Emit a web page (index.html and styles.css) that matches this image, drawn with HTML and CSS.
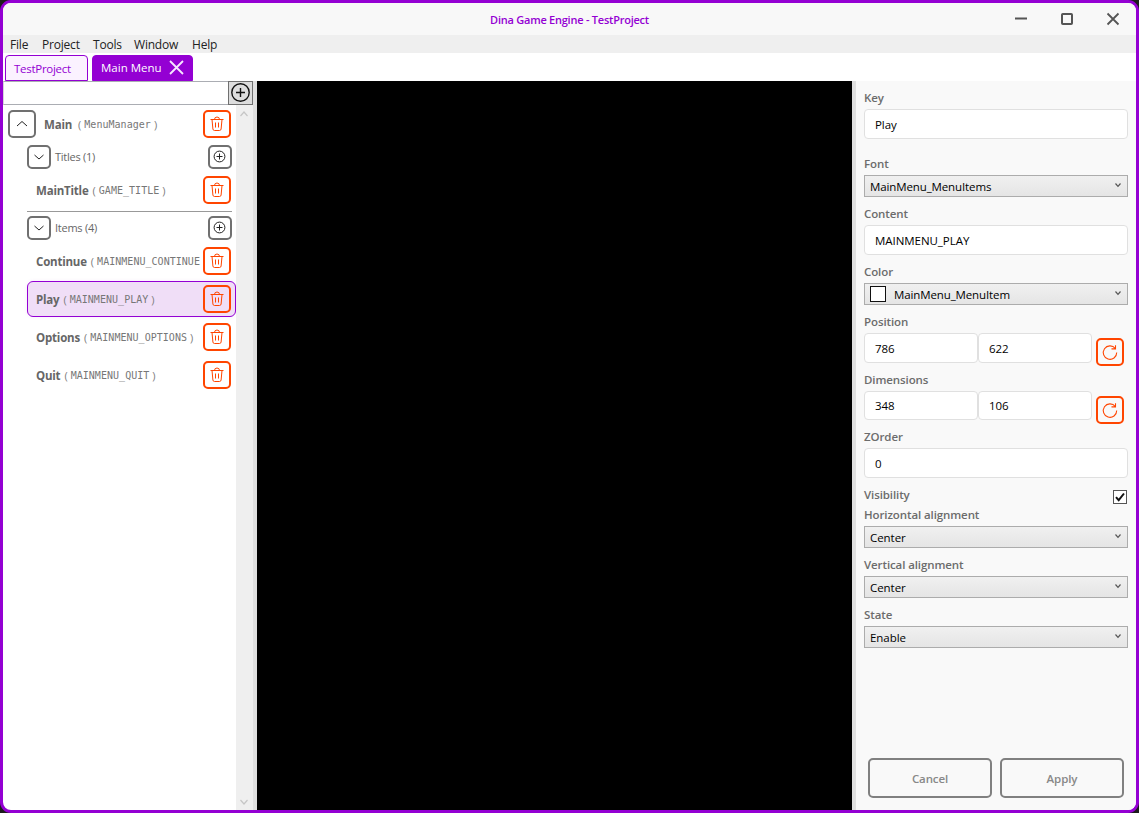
FILE: index.html
```html
<!DOCTYPE html>
<html lang="en">
<head>
<meta charset="utf-8">
<title>Dina Game Engine - TestProject</title>
<link rel="stylesheet" href="styles.css">
</head>
<body>
<svg class="defs" width="0" height="0">
  <symbol id="trash" viewBox="0 0 28 28"><path d="M7.5 9.5h13M11.5 9.500q0-2.500 2.500-2.500t2.500 2.500M9 9.500l.9 9.500q.2 1.500 1.600 1.500h5q1.400 0 1.600-1.500l.9-9.500M12.500 12.500v5M15.500 12.500v5" fill="none" stroke="#ff4500" stroke-width="1"/></symbol>
  <symbol id="plus" viewBox="0 0 24 24"><g fill="none" stroke="#222" stroke-width="1"><circle cx="11.500" cy="11.500" r="5.400"/><path d="M8.500 11.500h6M11.500 8.500v6"/></g></symbol>
  <symbol id="reset" viewBox="0 0 28 28"><path d="M19.300 10.500A6.700 6.700 0 1 0 20.700 14.500M15.500 10.900h4V7.200" fill="none" stroke="#ff4500" stroke-width="1.100"/></symbol>
  <symbol id="down" viewBox="0 0 24 24"><path d="M7.500 10l4.500 4 4.500-4" fill="none" stroke="#222" stroke-width="1"/></symbol>
  <symbol id="caret" viewBox="0 0 8 8"><path d="M1.500 2.500L4 5.300l2.500-2.800" fill="none" stroke="#555" stroke-width="1.200"/></symbol>
</svg>
<div class="window">
  <header class="titlebar">
    <span class="title">Dina Game Engine - TestProject</span>
    <svg class="winbtns" width="108" height="16" viewBox="0 0 108 16" fill="none" stroke="#555"><path d="M0 7.500h12" stroke-width="2"/><rect x="47" y="3" width="10" height="10" rx=".8" stroke-width="2"/><path d="M92.500 2.500l11 11M103.500 2.500l-11 11" stroke-width="1.800"/></svg>
  </header>
  <nav class="menu"><span class="m1">File</span><span class="m2">Project</span><span class="m3">Tools</span><span class="m4">Window</span><span class="m5">Help</span></nav>
  <div class="tabs">
    <div class="tab"><span class="t-test">TestProject</span></div>
    <div class="tab active"><span class="t-main">Main Menu</span><svg width="15" height="15" viewBox="0 0 15 15"><path d="M1 1l13 13M14 1L1 14" stroke="#f6e6ff" stroke-width="1.800" fill="none"/></svg></div>
  </div>
  <div class="workspace">
    <aside class="sidebar">
      <div class="search"><div class="searchbox"></div><div class="add"><svg width="22" height="22" viewBox="0 0 22 22" fill="none" stroke="#111" stroke-width="1.400"><circle cx="10.500" cy="10.500" r="8.700"/><path d="M6 10.500h9M10.500 6v9"/></svg></div></div>
      <div class="treewrap">
        <div class="tree">
          <div class="row main"><span class="btn"><svg><path d="M9 16l5-4.500 5 4.500" fill="none" stroke="#222"/></svg></span><b class="n-main">Main</b><i>(</i><code>MenuManager</code><i>)</i><span class="btn red"><svg><use href="#trash"/></svg></span></div>
          <div class="row group"><span class="btn small"><svg><use href="#down"/></svg></span><em>Titles (1)</em><span class="btn small end"><svg><use href="#plus"/></svg></span></div>
          <div class="row item first"><b>MainTitle</b><i>(</i><code>GAME_TITLE</code><i>)</i><span class="btn red"><svg><use href="#trash"/></svg></span></div>
          <div class="divider"></div>
          <div class="row group items"><span class="btn small"><svg><use href="#down"/></svg></span><em>Items (4)</em><span class="btn small end"><svg><use href="#plus"/></svg></span></div>
          <div class="row item"><b>Continue</b><i>(</i><code>MAINMENU_CONTINUE</code><span class="btn red"><svg><use href="#trash"/></svg></span></div>
          <div class="row item selected"><b>Play</b><i>(</i><code>MAINMENU_PLAY</code><i>)</i><span class="btn red"><svg><use href="#trash"/></svg></span></div>
          <div class="row item"><b>Options</b><i>(</i><code>MAINMENU_OPTIONS</code><i>)</i><span class="btn red"><svg><use href="#trash"/></svg></span></div>
          <div class="row item"><b>Quit</b><i>(</i><code>MAINMENU_QUIT</code><i>)</i><span class="btn red"><svg><use href="#trash"/></svg></span></div>
        </div>
        <div class="scrollbar">
          <svg width="10" height="8" viewBox="0 0 10 8"><path d="M1.500 6L5 2l3.500 4" fill="none" stroke="#c6c6c6" stroke-width="1.200"/></svg>
          <svg width="10" height="8" viewBox="0 0 10 8"><path d="M1.500 2L5 6l3.500-4" fill="none" stroke="#c6c6c6" stroke-width="1.200"/></svg>
        </div>
      </div>
    </aside>
    <div class="splitter"></div>
    <main class="canvas"></main>
    <div class="splitter"></div>
    <section class="props">
      <div class="field key"><label>Key</label><div class="input">Play</div></div>
      <div class="field"><label>Font</label><div class="select"><span class="v-wide">MainMenu_MenuItems</span><svg><use href="#caret"/></svg></div></div>
      <div class="field"><label>Content</label><div class="input"><span class="v-caps">MAINMENU_PLAY</span></div></div>
      <div class="field"><label>Color</label><div class="select"><span class="swatch"></span><span class="v-wide">MainMenu_MenuItem</span><svg><use href="#caret"/></svg></div></div>
      <div class="field"><label>Position</label><div class="pair"><div class="input">786</div><div class="input">622</div><span class="btn red"><svg><use href="#reset"/></svg></span></div></div>
      <div class="field dims"><label>Dimensions</label><div class="pair"><div class="input">348</div><div class="input">106</div><span class="btn red"><svg><use href="#reset"/></svg></span></div></div>
      <div class="field"><label>ZOrder</label><div class="input">0</div></div>
      <div class="field check"><label>Visibility</label><svg width="14" height="14" viewBox="0 0 14 14"><rect x=".5" y=".5" width="13" height="13" fill="#fff" stroke="#555"/><path d="M3 7.200l2.700 3L11 3.500" fill="none" stroke="#111" stroke-width="2"/></svg></div>
      <div class="field"><label>Horizontal alignment</label><div class="select">Center<svg><use href="#caret"/></svg></div></div>
      <div class="field"><label>Vertical alignment</label><div class="select">Center<svg><use href="#caret"/></svg></div></div>
      <div class="field"><label>State</label><div class="select">Enable<svg><use href="#caret"/></svg></div></div>
      <div class="actions"><div class="action">Cancel</div><div class="action">Apply</div></div>
    </section>
  </div>
</div>
</body>
</html>
```
FILE: styles.css
```css
* { box-sizing: border-box; }
html { background: #1c1c1c; }
body { margin: 0; height: 813px; overflow: hidden; font: 12px/16px "Open Sans", "Noto Sans", sans-serif; color: #111; }
.defs { position: absolute; }
svg { display: block; flex: none; }
span, b, i, em, code, label { white-space: nowrap; }
.window { width: 1139px; height: 813px; border: 3px solid #9400d3; border-radius: 11px; overflow: hidden; background: #fff; display: flex; flex-direction: column; }
.titlebar { height: 32px; background: #f8f8f8; display: grid; grid-template-columns: 1fr auto 1fr; align-items: center; }
.title { grid-column: 2; color: #9400d3; font-size: 11px; font-weight: 600; letter-spacing: -.24px; line-height: 34px; }
.winbtns { justify-self: end; margin: -1px 13px 1px 0; }
.menu { height: 18px; background: #efefef; display: flex; padding-left: 7px; line-height: 19px; color: #222; }
.menu span { font-size: 12px; letter-spacing: -.2px; }
.m1 { width: 32px; } .m2 { width: 51px; } .m3 { width: 41px; } .m4 { width: 58px; }
.tabs { height: 28px; display: flex; gap: 4px; padding: 2px 2px 0; }
.tab { width: 83px; height: 26px; border: 1px solid #9400d3; border-radius: 4px 4px 0 0; background: #fbf2ff; color: #9400d3; padding-left: 8px; line-height: 26px; font-size: 11.500px; }
.t-test { display: block; letter-spacing: -.28px; }
.tab.active { width: 101px; background: #9400d3; color: #fff; display: flex; align-items: center; gap: 7px; }
.tab.active svg { margin-top: -1px; }
.workspace { height: 729px; display: flex; }
.sidebar { width: 250px; display: flex; flex-direction: column; }
.search { height: 24px; display: flex; }
.searchbox { width: 226px; border: 1px solid #abadb3; border-left-color: #d5d6d9; }
.add { width: 25px; margin-left: -1px; background: #ddd; border: 1px solid #707070; display: flex; align-items: center; justify-content: center; }
.treewrap { flex: 1; display: flex; }
.tree { width: 233px; padding-top: 3px; }
.scrollbar { width: 17px; background: #efefef; display: flex; flex-direction: column; justify-content: space-between; align-items: center; padding: 5px 1px 4px 0; }
.splitter { width: 4px; background: #e0e0e0; }
.canvas { width: 595px; background: #000; }
.row { display: flex; align-items: center; color: #666; }
.row b { font-weight: 700; font-size: 11.500px; letter-spacing: -.2px; }
.row i { font-style: normal; font-size: 11px; color: #808080; }
.row em { font-style: normal; font-size: 11px; letter-spacing: -.25px; color: #666; }
.row code { font: 10px/16px "DejaVu Sans Mono", monospace; letter-spacing: .03px; color: #777; margin: 1px 3px 0 3px; }
.btn { width: 28px; height: 28px; border: 2px solid #707070; border-radius: 5px; flex: none; background: #fff; }
.btn svg { width: 28px; height: 28px; margin: -2px; }
.btn.red { border-color: #ff4500; }
.row .btn.red { margin-left: auto; }
.btn.small { width: 24px; height: 24px; }
.btn.small svg { width: 24px; height: 24px; }
.row.main { height: 32px; padding: 0 5px; }
.row.main b { margin: 0 6px 0 8px; }
.row.main b, .row.main i { padding-top: 1px; }
.row.main code { margin-top: 2px; }
.row.group { height: 34px; padding: 0 4px 0 24px; }
.row.group.items { height: 32px; margin-bottom: -1px; }
.row.group em { margin-left: 4px; }
.row .end { margin-left: auto; }
.row.item { height: 36px; margin: 0 0 2px 24px; padding: 0 4px 0 8px; border: 1px solid transparent; border-radius: 6px; }
.row.item b { margin-right: 4px; }
.row.item b, .row.item i { padding-top: 1px; }
.row.item code { margin-top: 2px; }
.row.item.first { height: 32px; margin-bottom: 5px; }
.row.item.selected { border-color: #9400d3; background: #f0def7; box-shadow: 0 0 4px #9400d312; }
.selected .btn { background: transparent; }
.divider { height: 1px; margin: 0 4px 0 24px; background: #999; }
.props { width: 280px; background: #f9f9f9; padding: 9px 8px 12px; display: flex; flex-direction: column; }
.field { margin-bottom: 9px; }
.field.key { margin-bottom: 17px; }
.field label { display: block; height: 16px; margin-bottom: 3px; font-size: 11.500px; letter-spacing: -.1px; font-weight: 600; color: #6c6c6c; }
.input { height: 30px; border: 1px solid #e0e0e0; border-radius: 4px; background: #fff; padding-left: 10px; line-height: 30px; }
.input, .select { font-size: 11.500px; color: #000; letter-spacing: -.05px; }
.v-wide { letter-spacing: -.12px; }
.select { height: 22px; border: 1px solid #acacac; background: linear-gradient(#f0f0f0, #e5e5e5); display: flex; align-items: center; padding: 2px 5px 0 5px; }
.select svg { width: 8px; height: 8px; margin: -4px 0 0 auto; }
.swatch { width: 16px; height: 16px; border: 1px solid #111; background: #fff; margin: -2px 8px 0 0; }
.pair { display: flex; }
.pair .input { width: 114px; }
.pair .btn { margin: 5px 0 -4px 4px; background: transparent; }
.dims .input { height: 29px; line-height: 28px; }
.dims .btn { margin: 5px 0 -4px 4px; }
.check { height: 16px; display: flex; justify-content: space-between; margin-bottom: 4px; }
.check svg { margin: 3px 1px 0 0; }
.actions { margin-top: auto; display: flex; gap: 8px; padding: 0 4px; }
.action { width: 124px; height: 40px; border: 2px solid #808080; border-radius: 5px; text-align: center; line-height: 37px; font-weight: 600; font-size: 11.500px; letter-spacing: -.1px; color: #888; }
```
